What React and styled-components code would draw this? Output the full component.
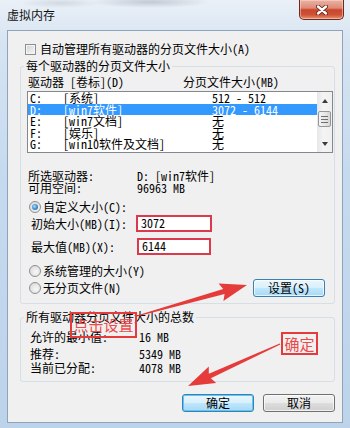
import React from 'react';
import styled, { createGlobalStyle } from 'styled-components';

const FONT = `"Noto Sans Mono CJK SC", "Noto Sans CJK SC", "Liberation Sans", sans-serif`;
const RED = '#e63b3b';

const drives = [
  { letter: 'C:', label: '[系统]', size: '512 - 512' },
  { letter: 'D:', label: '[win7软件]', size: '3072 - 6144', selected: true },
  { letter: 'E:', label: '[win7文档]', size: '无' },
  { letter: 'F:', label: '[娱乐]', size: '无' },
  { letter: 'G:', label: '[win10软件及文档]', size: '无' },
];

const totals = [
  { label: '允许的最小值:', value: '16 MB', gap: 7 },
  { label: '推荐:', value: '5349 MB', gap: 5 },
  { label: '当前已分配:', value: '4078 MB', gap: 2 },
];

const GlobalStyle = createGlobalStyle`
  html, body { margin: 0; padding: 0; }
  body { width: 350px; height: 428px; overflow: hidden; background: #c4d8ee; }
`;

export default function App() {
  return (
    <>
      <GlobalStyle />
      <Window>
        <TitleBar>
          <Title>虚拟内存</Title>
          <CloseButton>
            <svg width="12" height="10" viewBox="0 0 12 10">
              <path d="M2 1.5 L10 8.5 M10 1.5 L2 8.5" stroke="#5b1c12" strokeWidth="4" strokeLinecap="round" />
              <path d="M2 1.5 L10 8.5 M10 1.5 L2 8.5" stroke="#fff" strokeWidth="2.4" strokeLinecap="round" />
            </svg>
          </CloseButton>
        </TitleBar>

        <Client>
          <CheckRow>
            <CheckBox />
            <span>自动管理所有驱动器的分页文件大小(A)</span>
          </CheckRow>

          <Group $bottom={6}>
            <Legend>每个驱动器的分页文件大小</Legend>
            <HeaderRow>
              <Cell $w={155}>驱动器 [卷标](D)</Cell>
              <span>分页文件大小(MB)</span>
            </HeaderRow>

            <ListBox>
              <Rows>
                {drives.map(d => (
                  <DriveRow key={d.letter} $selected={d.selected}>
                    <Cell $w={35} $pad={2}>{d.letter}</Cell>
                    <Cell $w={149}>{d.label}</Cell>
                    <span>{d.size}</span>
                  </DriveRow>
                ))}
              </Rows>
              <ScrollBar>
                <ScrollArrow><ArrowUp /></ScrollArrow>
                <Track $h={2} />
                <Thumb><Grip /></Thumb>
                <Track $grow />
                <ScrollArrow><ArrowDown /></ScrollArrow>
              </ScrollBar>
            </ListBox>

            <InfoRow $top={17}>
              <Cell $w={109}>所选驱动器:</Cell>
              <span>D:  [win7软件]</span>
            </InfoRow>
            <InfoRow>
              <Cell $w={109}>可用空间:</Cell>
              <span>96963 MB</span>
            </InfoRow>

            <RadioRow $top={6}>
              <Radio $checked />
              <span>自定义大小(C):</span>
            </RadioRow>
            <FieldRow $top={1}>
              <Cell $w={105}>初始大小(MB)(I):</Cell>
              <SizeInput $w={76}>3072</SizeInput>
            </FieldRow>
            <FieldRow $top={6}>
              <Cell $w={106}>最大值(MB)(X):</Cell>
              <SizeInput $w={74}>6144</SizeInput>
            </FieldRow>
            <RadioRow $top={9}>
              <Radio />
              <span>系统管理的大小(Y)</span>
            </RadioRow>
            <ActionRow>
              <RadioLabel>
                <Radio />
                <span>无分页文件(N)</span>
              </RadioLabel>
              <Button $hot>设置(S)</Button>
            </ActionRow>
          </Group>

          <Group $top={13} $bottom={7}>
            <Legend>所有驱动器分页文件大小的总数</Legend>
            {totals.map(t => (
              <TotalRow key={t.label} $top={t.gap}>
                <Cell $w={109}>{t.label}</Cell>
                <span>{t.value}</span>
              </TotalRow>
            ))}
          </Group>

          <ButtonRow>
            <Button $hot $default>确定</Button>
            <Button>取消</Button>
          </ButtonRow>
        </Client>

        <Overlay width="350" height="428" viewBox="0 0 350 428">
          <polygon
            fill={RED}
            points="137.1,316.6 224.6,293.9 223.4,301.0 247,285 218.6,283.6 223.2,289.1 136.9,315.4"
          />
          <polygon
            fill={RED}
            points="280.3,344.6 210.8,378.3 216.2,383.0 188,386 208.8,366.6 208.8,373.7 279.7,343.4"
          />
        </Overlay>
        <Note $x={70} $y={312} $w={67} $h={26}>点击设置</Note>
        <Note $x={281} $y={332} $w={37} $h={23}>确定</Note>
      </Window>
    </>
  );
}

const Window = styled.div`
  position: relative;
  width: 350px;
  height: 428px;
  box-sizing: border-box;
  padding: 0 7px 5px 7px;
  display: flex;
  flex-direction: column;
  background:
    radial-gradient(ellipse 60px 6px at 150px 2px, rgba(120, 130, 145, 0.35), transparent),
    radial-gradient(ellipse 40px 5px at 60px 3px, rgba(140, 150, 160, 0.25), transparent),
    linear-gradient(180deg, #eaf0f7 0%, #d6e4f2 10%, #c6daef 40%, #bdd3ea 100%);
  font-family: ${FONT};
  font-size: 12px;
  color: #000;
`;

const TitleBar = styled.div`
  height: 30px;
  display: flex;
  justify-content: space-between;
  align-items: flex-start;
`;

const Title = styled.div`
  margin-top: 8px;
  line-height: 14px;
  font-family: "Noto Sans CJK SC", sans-serif;
  font-size: 12px;
  color: #111;
`;

const CloseButton = styled.div`
  width: 45px;
  height: 20px;
  margin-right: -1px;
  box-sizing: border-box;
  border: 1px solid #6a2a1e;
  border-top: none;
  border-radius: 0 0 5px 5px;
  display: flex;
  align-items: center;
  justify-content: center;
  background: linear-gradient(180deg, #eab3a6 0%, #df8a76 42%, #c9462c 52%, #cf5236 78%, #e69475 100%);
  box-shadow: inset 0 0 0 1px rgba(255, 220, 210, 0.5);
`;

const Client = styled.div`
  flex: 1;
  display: flex;
  flex-direction: column;
  box-sizing: border-box;
  border: 1px solid #8fa3bb;
  background: #f0f0f0;
`;

const CheckRow = styled.div`
  height: 14px;
  margin: 11px 0 0 17px;
  display: flex;
  align-items: center;
  gap: 4px;
  line-height: 14px;
`;

const CheckBox = styled.span`
  width: 11px;
  height: 11px;
  box-sizing: border-box;
  border: 1px solid #8e8f8f;
  background: linear-gradient(135deg, #d2d2d2 0%, #e9e9e9 60%, #f6f6f6 100%);
  box-shadow: inset 0 0 0 1px #f4f4f4;
`;

const Group = styled.div`
  margin: ${p => p.$top || 10}px 7px 0 12px;
  padding-bottom: ${p => p.$bottom}px;
  border: 1px solid #d5dfe5;
  border-radius: 3px;
  display: flex;
  flex-direction: column;
`;

const Legend = styled.div`
  align-self: flex-start;
  margin: -8px 0 0 3px;
  padding: 0 2px;
  line-height: 14px;
  background: #f0f0f0;
`;

const Cell = styled.span`
  flex: none;
  width: ${p => p.$w}px;
  box-sizing: border-box;
  padding-left: ${p => p.$pad || 0}px;
  white-space: pre;
`;

const HeaderRow = styled.div`
  margin-top: 3px;
  padding-left: 7px;
  height: 12px;
  line-height: 12px;
  display: flex;
`;

const ListBox = styled.div`
  margin: 3px 1px 0 6px;
  height: 62px;
  box-sizing: border-box;
  border: 1px solid #828790;
  background: #fff;
  display: flex;
`;

const Rows = styled.div`
  flex: 1;
  display: flex;
  flex-direction: column;
`;

const DriveRow = styled.div`
  height: 11.5px;
  line-height: 11.5px;
  display: flex;
  align-items: center;
  white-space: pre;
  background: ${p => (p.$selected ? '#3399ff' : 'transparent')};
  color: ${p => (p.$selected ? '#fff' : '#000')};
`;

const ScrollBar = styled.div`
  width: 15px;
  display: flex;
  flex-direction: column;
  background: linear-gradient(90deg, #e6e6e6 0%, #f4f4f4 40%, #f0f0f0 100%);
`;

const ScrollArrow = styled.div`
  height: 17px;
  display: flex;
  align-items: center;
  justify-content: center;
`;

const ArrowUp = styled.span`
  width: 0;
  height: 0;
  border-left: 3.5px solid transparent;
  border-right: 3.5px solid transparent;
  border-bottom: 4px solid #3b3b3b;
`;

const ArrowDown = styled.span`
  width: 0;
  height: 0;
  border-left: 3.5px solid transparent;
  border-right: 3.5px solid transparent;
  border-top: 4px solid #3b3b3b;
`;

const Track = styled.div`
  height: ${p => (p.$h ? `${p.$h}px` : 'auto')};
  flex: ${p => (p.$grow ? 1 : 'none')};
`;

const Thumb = styled.div`
  height: 16px;
  margin: 0 1px;
  box-sizing: border-box;
  border: 1px solid #979797;
  border-radius: 2px;
  background: linear-gradient(90deg, #f4f4f4 0%, #e8e8e8 50%, #d6d6d6 100%);
  display: flex;
  align-items: center;
  justify-content: center;
`;

const Grip = styled.span`
  width: 7px;
  height: 7px;
  background: repeating-linear-gradient(180deg, #6f6f6f 0 1px, transparent 1px 3px);
`;

const InfoRow = styled.div`
  margin-top: ${p => p.$top || 0}px;
  padding-left: 7px;
  height: 12px;
  line-height: 12px;
  display: flex;
`;

const RadioRow = styled.div`
  margin-top: ${p => p.$top}px;
  padding-left: 8px;
  height: 14px;
  line-height: 14px;
  display: flex;
  align-items: center;
  gap: 2px;
`;

const RadioLabel = styled.div`
  display: flex;
  align-items: center;
  gap: 2px;
  line-height: 14px;
`;

const Radio = styled.span`
  position: relative;
  width: 12px;
  height: 12px;
  box-sizing: border-box;
  border-radius: 50%;
  border: 1px solid #8e8f8f;
  background: radial-gradient(circle at 60% 60%, #f8f8f8 0%, #e2e2e2 60%, #cfcfcf 100%);
  &::after {
    content: '';
    display: ${p => (p.$checked ? 'block' : 'none')};
    position: absolute;
    left: 2px;
    top: 2px;
    width: 6px;
    height: 6px;
    border-radius: 50%;
    background: radial-gradient(circle at 40% 40%, #a9def8 0%, #3b8ccc 55%, #1b4f82 100%);
  }
`;

const FieldRow = styled.div`
  margin-top: ${p => p.$top}px;
  padding-left: 10px;
  height: 17px;
  display: flex;
  align-items: center;
  line-height: 14px;
`;

const SizeInput = styled.div`
  width: ${p => p.$w}px;
  height: 17px;
  box-sizing: border-box;
  border: 2px solid #dc3a4c;
  background: #fff;
  padding-left: 3px;
  line-height: 12px;
`;

const ActionRow = styled.div`
  margin-top: 1px;
  padding: 0 9px 0 8px;
  height: 18px;
  display: flex;
  align-items: center;
  justify-content: space-between;
`;

const Button = styled.div`
  width: 72px;
  height: 18px;
  box-sizing: border-box;
  border: 1px solid ${p => (p.$hot ? '#3c7fb1' : '#707070')};
  border-radius: 3px;
  display: flex;
  align-items: center;
  justify-content: center;
  line-height: 14px;
  background: ${p =>
    p.$hot
      ? 'linear-gradient(180deg, #eaf6fd 0%, #d9f0fc 48%, #bee6fd 52%, #a7d9f5 100%)'
      : 'linear-gradient(180deg, #f2f2f2 0%, #ebebeb 48%, #dddddd 52%, #cfcfcf 100%)'};
  box-shadow: inset 0 0 0 1px ${p => (p.$default ? '#5ec8f5' : 'rgba(255,255,255,0.7)')};
`;

const TotalRow = styled.div`
  margin-top: ${p => p.$top}px;
  padding-left: 9px;
  height: 12px;
  line-height: 12px;
  display: flex;
`;

const ButtonRow = styled.div`
  margin: 12px 7px 0 0;
  display: flex;
  justify-content: flex-end;
  gap: 9px;
`;

const Overlay = styled.svg`
  position: absolute;
  left: 0;
  top: 0;
  pointer-events: none;
`;

const Note = styled.div`
  position: absolute;
  left: ${p => p.$x}px;
  top: ${p => p.$y}px;
  width: ${p => p.$w}px;
  height: ${p => p.$h}px;
  box-sizing: border-box;
  border: 2px solid ${RED};
  display: flex;
  align-items: center;
  justify-content: center;
  font-family: "Noto Sans CJK SC", sans-serif;
  font-size: 15px;
  line-height: 18px;
  color: #ec4a4a;
  pointer-events: none;
`;
